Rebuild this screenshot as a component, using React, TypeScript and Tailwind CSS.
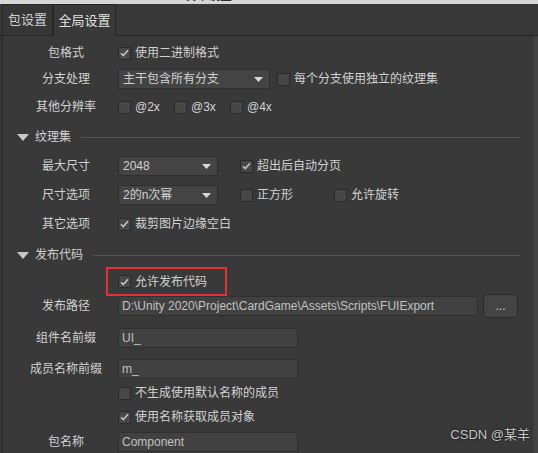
import type { ReactNode } from "react"

const FONT = { fontFamily: '"Liberation Sans", "Noto Sans CJK SC", sans-serif' }

function Check({ checked }: { checked?: boolean }) {
  return (
    <span className="flex h-[13px] w-[13px] shrink-0 items-center justify-center border border-[#2a2a2a] bg-[#474747]">
      {checked && (
        <svg width="9" height="8" viewBox="0 0 9 8">
          <path d="M1 4.2 L3.3 6.5 L8 1.2" fill="none" stroke="#c4c4c4" strokeWidth="1.6" />
        </svg>
      )}
    </span>
  )
}

function CheckItem({ checked, label, className = "" }: { checked?: boolean; label: string; className?: string }) {
  return (
    <span className={`flex items-center gap-[4px] ${className}`}>
      <Check checked={checked} />
      <span>{label}</span>
    </span>
  )
}

function Dropdown({ value, width }: { value: string; width: string }) {
  return (
    <span className={`flex h-[20px] ${width} items-center justify-between border border-[#2f2f2f] bg-[#444444] pl-[4px] pr-[6px]`}>
      <span>{value}</span>
      <svg width="9" height="5" viewBox="0 0 9 5">
        <path d="M0 0 H9 L4.5 5 Z" fill="#d8d8d8" />
      </svg>
    </span>
  )
}

function Input({ value, width }: { value: string; width: string }) {
  return (
    <span className={`flex h-[20px] ${width} items-center border border-[#303030] bg-[#414141] pl-[3px] text-[#c2c2c2]`}>
      {value}
    </span>
  )
}

function Row({ label, children, className = "" }: { label?: string; children?: ReactNode; className?: string }) {
  return (
    <div className={`flex h-[24px] items-center ${className}`}>
      <span className="w-[92px] shrink-0 text-center">{label}</span>
      <span className="ml-[6px] flex items-center">{children}</span>
    </div>
  )
}

function Section({ title, className = "" }: { title: string; className?: string }) {
  return (
    <div className={`flex h-[24px] items-center pr-[12px] ${className}`}>
      <svg width="12" height="7" viewBox="0 0 12 7" className="-ml-[3px]">
        <path d="M0 0 H12 L6 7 Z" fill="#c8c8c8" />
      </svg>
      <span className="ml-[6px]">{title}</span>
      <span className="ml-[10px] h-px flex-1 bg-[#555555]" />
    </div>
  )
}

export default function App() {
  return (
    <div className="relative h-[453px] w-[538px] overflow-hidden bg-[#393939] text-[12px] text-[#d2d2d2]" style={FONT}>
      <div className="h-[4px] overflow-hidden bg-[#d6d6d6]">
        <div className="-mt-[11px] pl-[184px] text-[12px] leading-[14px] text-black">发布设置</div>
      </div>

      <div className="flex h-[32px] items-end border-b border-[#262626] bg-[#383838] pl-[2px]">
        <div className="flex h-[31px] w-[51px] items-center justify-center border border-b-0 border-[#262626] bg-[#363636] text-[13px] text-[#cfcfcf]">
          包设置
        </div>
        <div className="-mb-px flex h-[32px] w-[63px] items-center justify-center border border-b-0 border-[#262626] bg-[#393939] text-[13px] text-[#e0e0e0]">
          全局设置
        </div>
      </div>

      <div className="flex h-[417px]">
        <div className="w-[2px] bg-[#343434]" />
        <div className="flex-1 border-l border-[#2a2a2a] pl-[17px]">
          <Row label="包格式" className="mt-[5px]">
            <CheckItem checked label="使用二进制格式" />
          </Row>
          <Row label="分支处理" className="mt-[2px]">
            <Dropdown value="主干包含所有分支" width="w-[152px]" />
            <CheckItem label="每个分支使用独立的纹理集" className="ml-[7px]" />
          </Row>
          <Row label="其他分辨率" className="mt-[4px]">
            <CheckItem label="@2x" className="w-[56px]" />
            <CheckItem label="@3x" className="w-[56px]" />
            <CheckItem label="@4x" />
          </Row>

          <Section title="纹理集" className="mt-[6px]" />
          <Row label="最大尺寸" className="mt-[5px]">
            <Dropdown value="2048" width="w-[100px]" />
            <CheckItem checked label="超出后自动分页" className="ml-[22px]" />
          </Row>
          <Row label="尺寸选项" className="mt-[5px]">
            <Dropdown value="2的n次幂" width="w-[100px]" />
            <CheckItem label="正方形" className="ml-[22px] w-[94px]" />
            <CheckItem label="允许旋转" />
          </Row>
          <Row label="其它选项" className="mt-[5px]">
            <CheckItem checked label="裁剪图片边缘空白" />
          </Row>

          <Section title="发布代码" className="mt-[7px]" />
          <div className="ml-[86px] flex h-[29px] w-[121px] items-center border-2 border-[#e8302f] pl-[10px]">
            <CheckItem checked label="允许发布代码" />
          </div>
          <Row label="发布路径" className="-mt-[2px]">
            <Input value="D:\Unity 2020\Project\CardGame\Assets\Scripts\FUIExport" width="w-[360px]" />
            <span className="ml-[5px] flex h-[24px] w-[35px] items-center justify-center rounded-[4px] border border-[#2a2a2a] bg-[#444444] text-[#d0d0d0]">
              ...
            </span>
          </Row>
          <Row label="组件名前缀" className="mt-[8px]">
            <Input value="UI_" width="w-[180px]" />
          </Row>
          <Row label="成员名称前缀" className="mt-[7px]">
            <Input value="m_" width="w-[180px]" />
          </Row>
          <Row className="h-[23px]">
            <CheckItem label="不生成使用默认名称的成员" />
          </Row>
          <Row>
            <CheckItem checked label="使用名称获取成员对象" />
          </Row>
          <Row label="包名称" className="mt-[1px]">
            <Input value="Component" width="w-[180px]" />
          </Row>
        </div>
        <div className="w-[6px] border-l border-[#353535] bg-[#424242]" />
      </div>

      <div className="absolute bottom-[9px] right-[8px] text-[13px] text-[#c8c8c8] [text-shadow:0_0_2px_#000]">
        CSDN @某羊
      </div>
    </div>
  )
}
